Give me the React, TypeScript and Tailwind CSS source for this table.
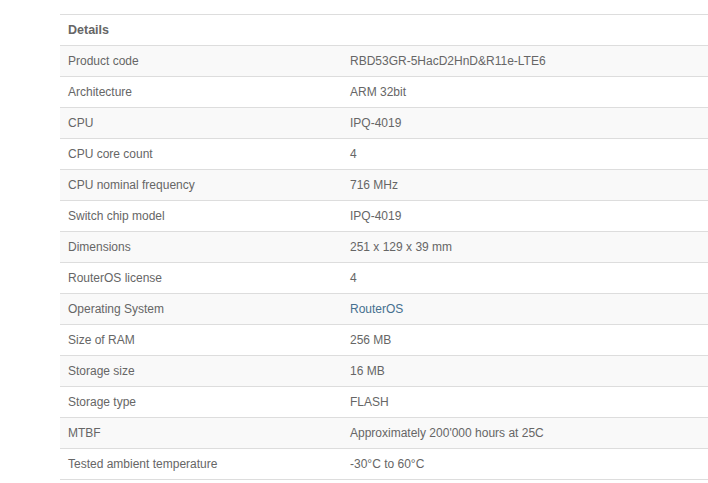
const rows: [string, string, boolean?][] = [
  ["Product code", "RBD53GR-5HacD2HnD&R11e-LTE6"],
  ["Architecture", "ARM 32bit"],
  ["CPU", "IPQ-4019"],
  ["CPU core count", "4"],
  ["CPU nominal frequency", "716 MHz"],
  ["Switch chip model", "IPQ-4019"],
  ["Dimensions", "251 x 129 x 39 mm"],
  ["RouterOS license", "4"],
  ["Operating System", "RouterOS", true],
  ["Size of RAM", "256 MB"],
  ["Storage size", "16 MB"],
  ["Storage type", "FLASH"],
  ["MTBF", "Approximately 200'000 hours at 25C"],
  ["Tested ambient temperature", "-30°C to 60°C"],
];

export default function App() {
  return (
    <div className="h-[483px] w-[708px] overflow-hidden bg-white pl-[60px] pt-[14px] font-['Liberation_Sans',Arial,sans-serif] text-[12px] text-[#666]">
      <div className="border-b border-[#ddd]">
        <div className="flex h-[31px] items-center border-t border-[#ddd] px-2 font-bold text-[12.5px]">
          Details
        </div>
        {rows.map(([label, value, link], i) => (
          <div
            key={label}
            className={`flex h-[31px] items-center border-t border-[#ddd] ${i % 2 === 0 ? "bg-[#f9f9f9]" : "bg-white"}`}
          >
            <div className="w-[282px] px-2">{label}</div>
            <div className={`px-2 ${link ? "text-[#46708f]" : ""}`}>{value}</div>
          </div>
        ))}
      </div>
    </div>
  );
}
